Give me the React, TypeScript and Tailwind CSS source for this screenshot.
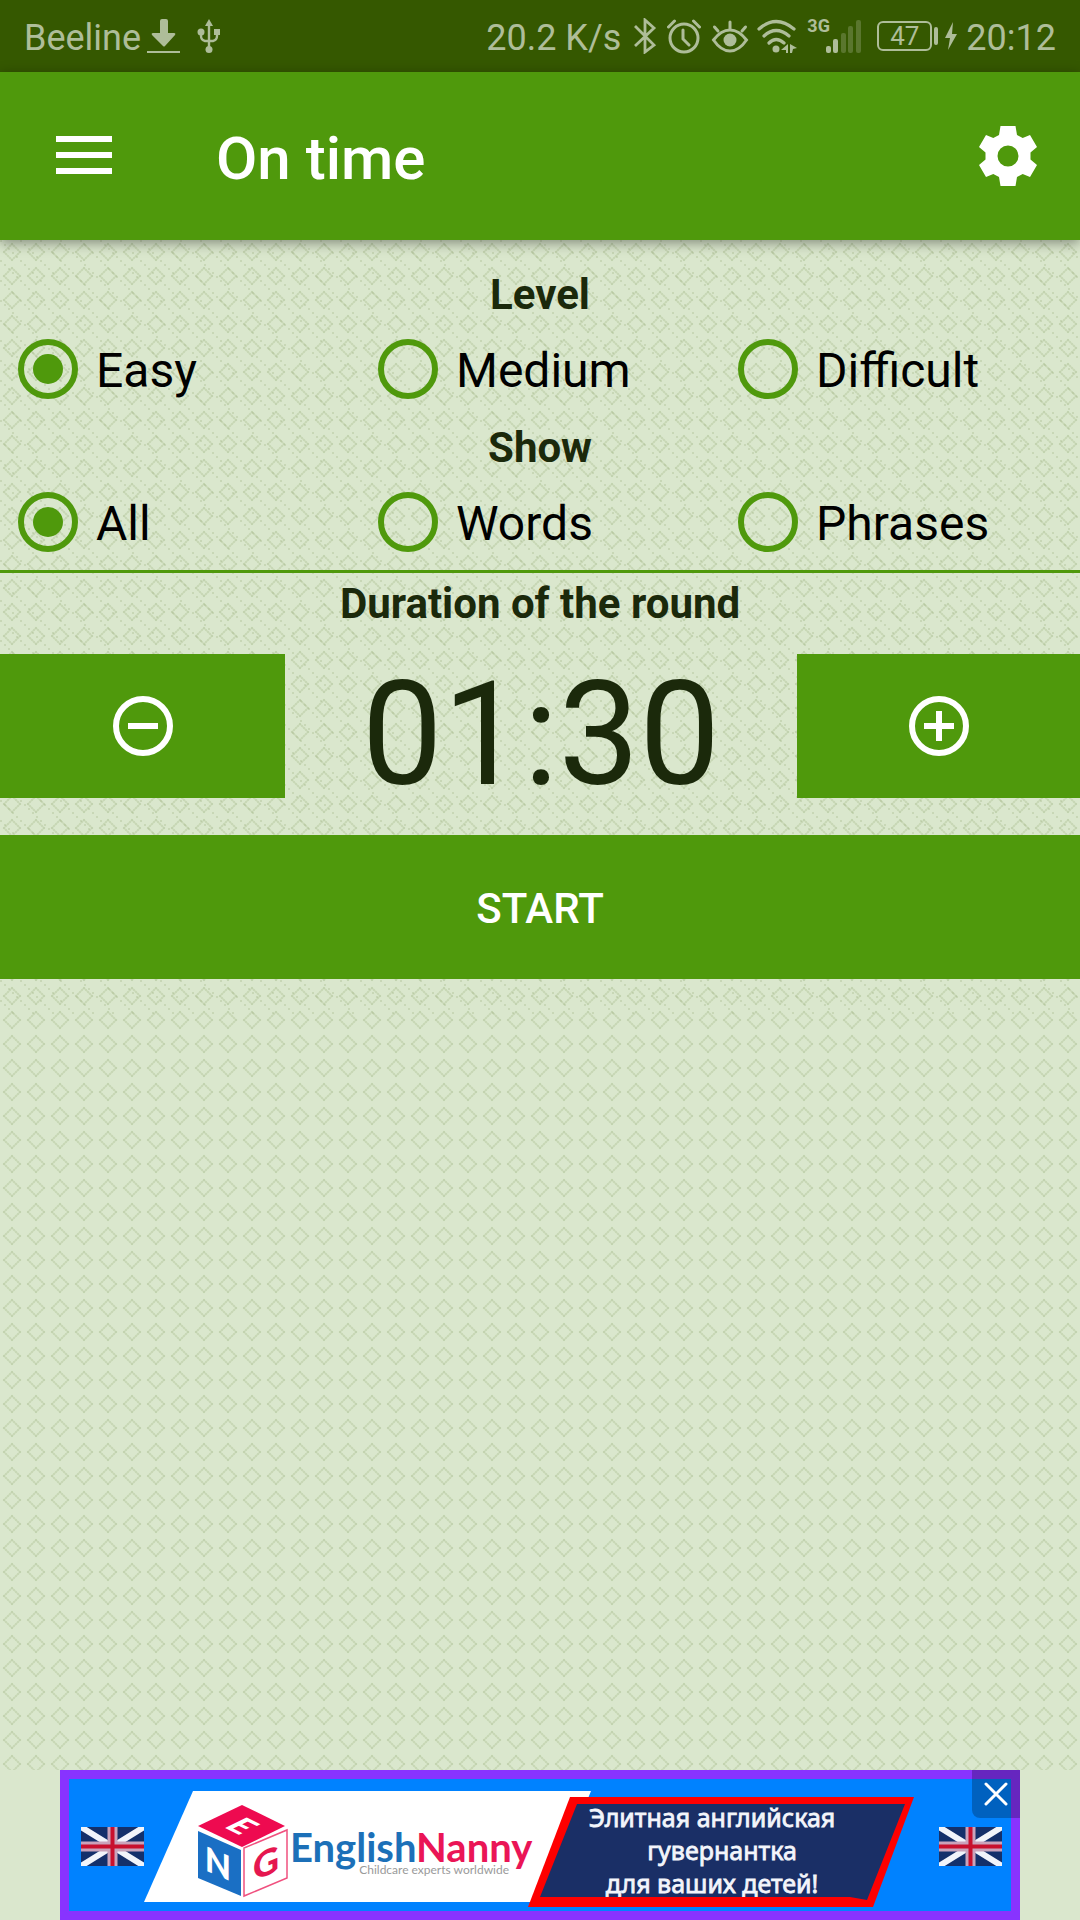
import { useState } from "react";

const LEVELS = ["Easy", "Medium", "Difficult"];
const SHOW = ["All", "Words", "Phrases"];

const DIAMOND = [0, 2, 4, 6, 8].flatMap((d) => [
  [11 + d, 3 + d],
  [11 - d, 3 + d],
  [11 + d, 19 - d],
  [11 - d, 19 - d],
]);

function DiamondBackdrop() {
  return (
    <svg className="absolute inset-0 h-full w-full" aria-hidden="true">
      <defs>
        <pattern id="diamonds" width="24" height="24" patternUnits="userSpaceOnUse">
          <path d="M12 4L20 12L12 20L4 12Z" fill="none" stroke="#a9bf93" strokeOpacity="0.24" strokeWidth="2" />
          {DIAMOND.map(([x, y], i) => (
            <rect key={i} x={x} y={y} width="2" height="2" fill="#a9bf93" fillOpacity="0.2" />
          ))}
        </pattern>
      </defs>
      <rect width="100%" height="100%" fill="url(#diamonds)" />
    </svg>
  );
}

function DottedBackdrop() {
  return (
    <svg className="absolute inset-0 h-full w-full" aria-hidden="true">
      <defs>
        <pattern id="dots" width="20" height="20" patternUnits="userSpaceOnUse">
          {[0, 4, 8, 12, 16].map((p) => (
            <rect key={p} x={p} y={p} width="2" height="2" fill="#a3b587" fillOpacity="0.32" />
          ))}
        </pattern>
      </defs>
      <rect width="100%" height="100%" fill="url(#dots)" />
    </svg>
  );
}

function StatusBar() {
  return (
    <div className="flex h-[72px] items-center justify-between bg-[#355800] pl-6 pr-6 text-4xl leading-10 text-[#aebd99]">
      <div className="flex items-center">
        <span className="pt-[3px]">Beeline</span>
        <svg className="ml-1.5 h-[36px] w-[34px]" viewBox="0 0 34 36" fill="currentColor" aria-hidden="true">
          <path d="M13 3q0-2 2-2h4q2 0 2 2v12h6q2 0 1 2L18 28q-1 1-2 0L5 17q-1-2 1-2h7z" />
          <rect x="0" y="33" width="33" height="2" />
        </svg>
        <svg className="ml-4 h-[36px] w-[24px]" viewBox="0 0 24 36" fill="none" stroke="currentColor" strokeWidth="2.400" aria-hidden="true">
          <path d="M12 6v24M4 14v4q0 4 4 5h8q4-1 4-5v-4" />
          <path d="M12 1l4 7H8z" fill="currentColor" stroke="none" />
          <circle cx="12" cy="31.500" r="3.500" fill="currentColor" stroke="none" />
          <circle cx="4" cy="14" r="3.500" fill="currentColor" stroke="none" />
          <rect x="17" y="11" width="6" height="6" fill="currentColor" stroke="none" />
        </svg>
      </div>
      <div className="flex items-center">
        <span className="pt-[3px]">20.2 K/s</span>
        <svg className="ml-3 h-[36px] w-[24px]" viewBox="0 0 24 36" fill="none" stroke="currentColor" strokeWidth="2.800" aria-hidden="true">
          <path d="M2 8l19 19-9 7V2l9 8L2 28" />
        </svg>
        <svg className="ml-2.5 h-[36px] w-[34px]" viewBox="0 0 34 36" fill="none" stroke="currentColor" strokeWidth="3" aria-hidden="true">
          <circle cx="17" cy="20" r="14" />
          <path d="M1.500 9l6-6M32.500 9l-6-6M16 12v9l6 6" strokeLinecap="round" />
        </svg>
        <svg className="ml-2.5 h-[36px] w-[38px]" viewBox="0 0 38 36" fill="none" stroke="currentColor" strokeWidth="3" strokeLinecap="round" aria-hidden="true">
          <path d="M2.500 22Q10 12 19 12t16.500 10Q28 33 19 33T2.500 22zM19 11V4M7 13L3.500 9M31 13l3.500-4" />
          <circle cx="19" cy="22" r="6.500" fill="currentColor" stroke="none" />
        </svg>
        <svg className="ml-2 h-[36px] w-[40px]" viewBox="0 0 40 36" fill="none" stroke="currentColor" strokeWidth="3.200" strokeLinecap="round" aria-hidden="true">
          <path d="M2 11q17-15 35 0M7 18q12-11 25 0M12 25q7-7 15 0" />
          <circle cx="19" cy="31" r="3.500" fill="currentColor" stroke="none" />
          <path d="M31 26v9h-2v-3h-5zM33 26l7 4-4 1-1 4h-2z" fill="currentColor" stroke="none" />
        </svg>
        <div className="relative ml-2.5 h-[36px] w-[54px]">
          <span className="absolute left-0 top-0 text-lg font-bold leading-4">3G</span>
          <svg className="h-full w-full" viewBox="0 0 54 36" fill="currentColor" aria-hidden="true">
            <rect x="19" y="28" width="5" height="7" rx="2" />
            <rect x="26" y="21" width="5" height="14" rx="2" />
            <rect x="34" y="15" width="5" height="20" rx="2" opacity="0.3" />
            <rect x="41" y="8" width="5" height="27" rx="2" opacity="0.3" />
            <rect x="49" y="2" width="5" height="33" rx="2" opacity="0.3" />
          </svg>
        </div>
        <div className="ml-4 flex h-[30px] w-[55px] items-center justify-center rounded-md border-2 border-current text-[26px] leading-7">
          47
        </div>
        <div className="ml-0.5 h-[18px] w-[4px] rounded-sm bg-current" />
        <svg className="ml-1.5 h-[28px] w-[14px]" viewBox="0 0 14 28" fill="currentColor" aria-hidden="true">
          <path d="M9 0L1 16h5L4 28l9-16H8z" />
        </svg>
        <span className="ml-2 pt-[3px]">20:12</span>
      </div>
    </div>
  );
}

function Header() {
  return (
    <header className="relative z-10 flex h-[168px] items-center bg-[#4f990c] px-9 text-white shadow-[0_3px_12px_rgba(0,0,0,0.4)]">
      <button type="button" aria-label="Menu" className="flex h-24 w-24 items-center justify-center">
        <svg className="h-10 w-14" viewBox="0 0 56 40" fill="currentColor" aria-hidden="true">
          <rect width="56" height="6" />
          <rect y="16" width="56" height="6" />
          <rect y="32" width="56" height="6" />
        </svg>
      </button>
      <h1 className="ml-[84px] flex-1 pt-1.5 text-6xl font-medium leading-[64px]">On time</h1>
      <button type="button" aria-label="Settings" className="flex h-[72px] w-[72px] items-center justify-center">
        <svg className="h-[60px] w-[58px]" viewBox="0 0 58 60" fill="currentColor" aria-hidden="true">
          <path
            fillRule="evenodd"
            d="M21.500 0H36.500L38 9L43.700 12L51 9L58 21L51.500 26.500V33.500L58 39L51 51L43.700 48L38 51L36.500 60H21.500L20 51L14.300 48L7 51L0 39L6.500 33.500V26.500L0 21L7 9L14.300 12L20 9ZM29 19.500A10.500 10.500 0 1 0 29 40.500A10.500 10.500 0 1 0 29 19.500Z"
          />
        </svg>
      </button>
    </header>
  );
}

type RadioRowProps = {
  title: string;
  name: string;
  options: string[];
  value: string;
  onChange: (value: string) => void;
};

function RadioRow({ title, name, options, value, onChange }: RadioRowProps) {
  return (
    <fieldset>
      <legend className="h-[57px] w-full text-center text-[42px] font-bold leading-[62px] text-[#1b290b]">{title}</legend>
      <div className="grid h-24 grid-cols-3">
        {options.map((option) => (
          <label key={option} className="flex items-center pl-[18px] text-5xl text-black">
            <input
              type="radio"
              name={name}
              checked={value === option}
              onChange={() => onChange(option)}
              className="grid h-[60px] w-[60px] appearance-none place-items-center rounded-full border-[6px] border-[#4f990c] before:h-[30px] before:w-[30px] before:rounded-full checked:before:bg-[#4f990c]"
            />
            <span className="pl-[18px] pt-[3px] leading-[60px]">{option}</span>
          </label>
        ))}
      </div>
    </fieldset>
  );
}

function RoundIcon({ plus }: { plus?: boolean }) {
  return (
    <svg className="h-[60px] w-[60px]" viewBox="0 0 60 60" fill="none" stroke="currentColor" strokeWidth="6" aria-hidden="true">
      <circle cx="30" cy="30" r="27" />
      <path d={plus ? "M15 30H45M30 15V45" : "M15 30H45"} />
    </svg>
  );
}

function Flag({ x }: { x: number }) {
  return (
    <svg x={x} y="57" width="63" height="39" viewBox="0 0 63 39">
      <rect width="63" height="39" fill="#14306b" />
      <path d="M0 0L63 39M63 0L0 39" stroke="#f1f4fb" strokeWidth="6" />
      <path d="M31.500 0V39M0 19.500H63" stroke="#c9a3bb" strokeWidth="10" />
      <path d="M31.500 0V39M0 19.500H63" stroke="#c8102e" strokeWidth="4" />
    </svg>
  );
}

function AdBanner() {
  return (
    <aside className="flex justify-center bg-[#dae7cd]">
      <div className="relative h-[150px] w-[960px] bg-[#8833ff]">
        <a href="#" aria-label="EnglishNanny" className="block">
          <svg className="h-[150px] w-full" viewBox="0 0 960 150">
            <rect x="9" y="9" width="942" height="132" fill="#0082ff" />
            <Flag x={21} />
            <Flag x={879} />
            <path d="M133 21H531L486 132H84Z" fill="#fff" />
            <path d="M182 35L225 56L182 77L138 56Z" fill="#ee0a50" />
            <path d="M138 61L181 80V126L138 108Z" fill="#1a6fc4" />
            <path d="M184 78L227 60V108L184 126Z" fill="#fff" stroke="#f0517f" strokeWidth="1.500" />
            <g fontFamily="Lato, sans-serif" fontWeight="900" textAnchor="middle">
              <text transform="matrix(0.870 0.430 -0.870 0.430 182 56)" y="12" fontSize="34" fill="#fff">E</text>
              <text transform="matrix(1 0.430 0 1 158 94)" y="12" fontSize="34" fill="#fff">N</text>
              <text transform="matrix(1 -0.430 0 1 206 94)" y="12" fontSize="36" fill="#e5174f">G</text>
            </g>
            <text x="449" y="104" textAnchor="end" fontFamily="Lato, sans-serif" fontSize="12" fill="#9a9a9a">
              Childcare experts worldwide
            </text>
            <text x="230" y="92" fontFamily="Lato, sans-serif" fontSize="40" fontWeight="700" fill="#1c70b8">
              English<tspan fill="#ea1556">Nanny</tspan>
            </text>
            <path d="M510 27H854L813 137H468Z" fill="#fe0000" />
            <path d="M517 34H845L807 130L790 127H480Z" fill="#1a2f66" />
            <g
              fontFamily="'Noto Sans', sans-serif"
              fontSize="25"
              fill="#f3f5fb"
              stroke="#f3f5fb"
              strokeWidth="0.800"
              textAnchor="middle"
            >
              <text x="652" y="57">Элитная английская</text>
              <text x="662" y="90">гувернантка</text>
              <text x="652" y="123">для ваших детей!</text>
            </g>
          </svg>
        </a>
        <button
          type="button"
          aria-label="Close ad"
          className="absolute right-0 top-0 flex h-12 w-12 items-center justify-center rounded-bl-lg bg-black/25 text-white"
        >
          <svg className="h-6 w-6" viewBox="0 0 24 24" fill="none" stroke="currentColor" strokeWidth="3" strokeLinecap="round" aria-hidden="true">
            <path d="M2 2L22 22M22 2L2 22" />
          </svg>
        </button>
      </div>
    </aside>
  );
}

export default function App() {
  const [level, setLevel] = useState("Easy");
  const [show, setShow] = useState("All");
  const [seconds, setSeconds] = useState(90);
  const clock = `${String(Math.floor(seconds / 60)).padStart(2, "0")}:${String(seconds % 60).padStart(2, "0")}`;
  const stepper = "flex h-36 items-center justify-center bg-[#4f990c] text-white";

  return (
    <div className="flex min-h-screen flex-col bg-[#dae7cd] font-['Roboto',sans-serif]">
      <StatusBar />
      <Header />
      <main className="relative flex-1">
        <DiamondBackdrop />
        <div className="relative pb-9">
          <DottedBackdrop />
          <div className="relative border-b-[3px] border-[#4f990c] pt-6">
            <RadioRow title="Level" name="level" options={LEVELS} value={level} onChange={setLevel} />
            <RadioRow title="Show" name="show" options={SHOW} value={show} onChange={setShow} />
          </div>
          <div className="relative">
            <h2 className="h-[57px] text-center text-[42px] font-bold leading-[62px] text-[#1b290b]">
              Duration of the round
            </h2>
            <div className="mt-6 grid grid-cols-[285fr_512fr_283fr]">
              <button type="button" aria-label="Less time" className={stepper} onClick={() => setSeconds(Math.max(0, seconds - 10))}>
                <RoundIcon />
              </button>
              <output className="h-36 text-center text-[144px] leading-[162px] text-[#1b290b]">{clock}</output>
              <button type="button" aria-label="More time" className={stepper} onClick={() => setSeconds(seconds + 10)}>
                <RoundIcon plus />
              </button>
            </div>
            <button
              type="button"
              className="mt-[37px] h-36 w-full bg-[#4f990c] pt-1 text-[42px] font-medium leading-[48px] text-white"
            >
              START
            </button>
          </div>
        </div>
      </main>
      <AdBanner />
    </div>
  );
}
